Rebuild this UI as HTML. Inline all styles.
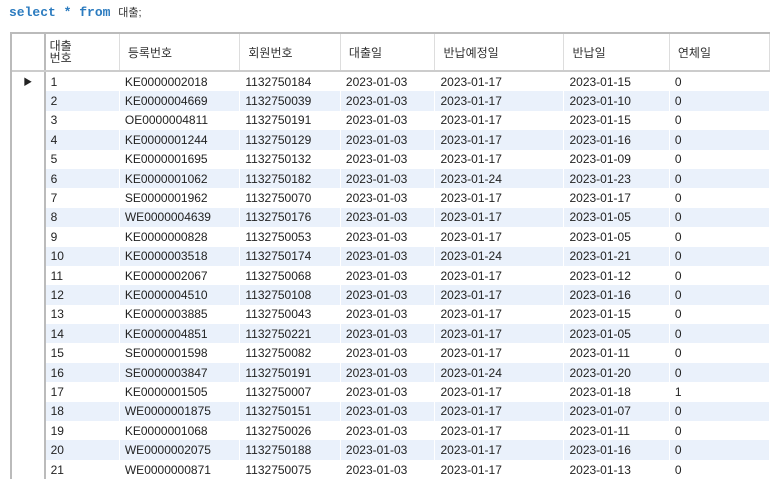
<!DOCTYPE html>
<html><head><meta charset="utf-8"><style>
body{margin:0;width:770px;height:496px;background:#fff;font-family:"Liberation Sans","Noto Sans CJK KR",sans-serif;position:relative;overflow:hidden}
.q{position:absolute;left:9px;top:4px;font-family:"Liberation Mono","Noto Sans CJK KR",monospace;font-size:13px;color:#2b7bbf;font-weight:bold}
.q span{color:#333;font-weight:normal;font-size:11px;font-family:"Liberation Sans","Noto Sans CJK KR",sans-serif}
.t{position:absolute;left:10px;top:32px;border-left:2px solid #bbb;border-top:2px solid #bbb;}
table{border-collapse:collapse;font-size:12px;color:#222}
td,th{padding:0 0 0 5px;height:19.4px;text-align:left;white-space:nowrap;border-right:1px solid #fff}
th{font-weight:normal;height:36px;border-right:1px solid #ddd;border-bottom:2px solid #ccc;font-size:12px;padding-left:8px;color:#333}
td.i,th.i{border-right:2px solid #bbb;padding:0;width:32px;font-size:9px;text-align:center}
tr:nth-child(odd) td:not(.i){background:#eaf1fb}
</style></head><body>
<div class="q">select * from <span>대출;</span></div>
<div class="t"><table>
<tr><th class="i"></th><th style="width:70px;line-height:12px;padding-left:4px">대출<br>번호</th><th style="width:112px">등록번호</th><th style="width:92px">회원번호</th><th style="width:86px">대출일</th><th style="width:121px">반납예정일</th><th style="width:97px">반납일</th><th style="width:92px">연체일</th></tr>
<tr><td class="i">▶</td><td>1</td><td>KE0000002018</td><td>1132750184</td><td>2023-01-03</td><td>2023-01-17</td><td>2023-01-15</td><td>0</td></tr>
<tr><td class="i"></td><td>2</td><td>KE0000004669</td><td>1132750039</td><td>2023-01-03</td><td>2023-01-17</td><td>2023-01-10</td><td>0</td></tr>
<tr><td class="i"></td><td>3</td><td>OE0000004811</td><td>1132750191</td><td>2023-01-03</td><td>2023-01-17</td><td>2023-01-15</td><td>0</td></tr>
<tr><td class="i"></td><td>4</td><td>KE0000001244</td><td>1132750129</td><td>2023-01-03</td><td>2023-01-17</td><td>2023-01-16</td><td>0</td></tr>
<tr><td class="i"></td><td>5</td><td>KE0000001695</td><td>1132750132</td><td>2023-01-03</td><td>2023-01-17</td><td>2023-01-09</td><td>0</td></tr>
<tr><td class="i"></td><td>6</td><td>KE0000001062</td><td>1132750182</td><td>2023-01-03</td><td>2023-01-24</td><td>2023-01-23</td><td>0</td></tr>
<tr><td class="i"></td><td>7</td><td>SE0000001962</td><td>1132750070</td><td>2023-01-03</td><td>2023-01-17</td><td>2023-01-17</td><td>0</td></tr>
<tr><td class="i"></td><td>8</td><td>WE0000004639</td><td>1132750176</td><td>2023-01-03</td><td>2023-01-17</td><td>2023-01-05</td><td>0</td></tr>
<tr><td class="i"></td><td>9</td><td>KE0000000828</td><td>1132750053</td><td>2023-01-03</td><td>2023-01-17</td><td>2023-01-05</td><td>0</td></tr>
<tr><td class="i"></td><td>10</td><td>KE0000003518</td><td>1132750174</td><td>2023-01-03</td><td>2023-01-24</td><td>2023-01-21</td><td>0</td></tr>
<tr><td class="i"></td><td>11</td><td>KE0000002067</td><td>1132750068</td><td>2023-01-03</td><td>2023-01-17</td><td>2023-01-12</td><td>0</td></tr>
<tr><td class="i"></td><td>12</td><td>KE0000004510</td><td>1132750108</td><td>2023-01-03</td><td>2023-01-17</td><td>2023-01-16</td><td>0</td></tr>
<tr><td class="i"></td><td>13</td><td>KE0000003885</td><td>1132750043</td><td>2023-01-03</td><td>2023-01-17</td><td>2023-01-15</td><td>0</td></tr>
<tr><td class="i"></td><td>14</td><td>KE0000004851</td><td>1132750221</td><td>2023-01-03</td><td>2023-01-17</td><td>2023-01-05</td><td>0</td></tr>
<tr><td class="i"></td><td>15</td><td>SE0000001598</td><td>1132750082</td><td>2023-01-03</td><td>2023-01-17</td><td>2023-01-11</td><td>0</td></tr>
<tr><td class="i"></td><td>16</td><td>SE0000003847</td><td>1132750191</td><td>2023-01-03</td><td>2023-01-24</td><td>2023-01-20</td><td>0</td></tr>
<tr><td class="i"></td><td>17</td><td>KE0000001505</td><td>1132750007</td><td>2023-01-03</td><td>2023-01-17</td><td>2023-01-18</td><td>1</td></tr>
<tr><td class="i"></td><td>18</td><td>WE0000001875</td><td>1132750151</td><td>2023-01-03</td><td>2023-01-17</td><td>2023-01-07</td><td>0</td></tr>
<tr><td class="i"></td><td>19</td><td>KE0000001068</td><td>1132750026</td><td>2023-01-03</td><td>2023-01-17</td><td>2023-01-11</td><td>0</td></tr>
<tr><td class="i"></td><td>20</td><td>WE0000002075</td><td>1132750188</td><td>2023-01-03</td><td>2023-01-17</td><td>2023-01-16</td><td>0</td></tr>
<tr><td class="i"></td><td>21</td><td>WE0000000871</td><td>1132750075</td><td>2023-01-03</td><td>2023-01-17</td><td>2023-01-13</td><td>0</td></tr>
</table></div>
</body></html>
